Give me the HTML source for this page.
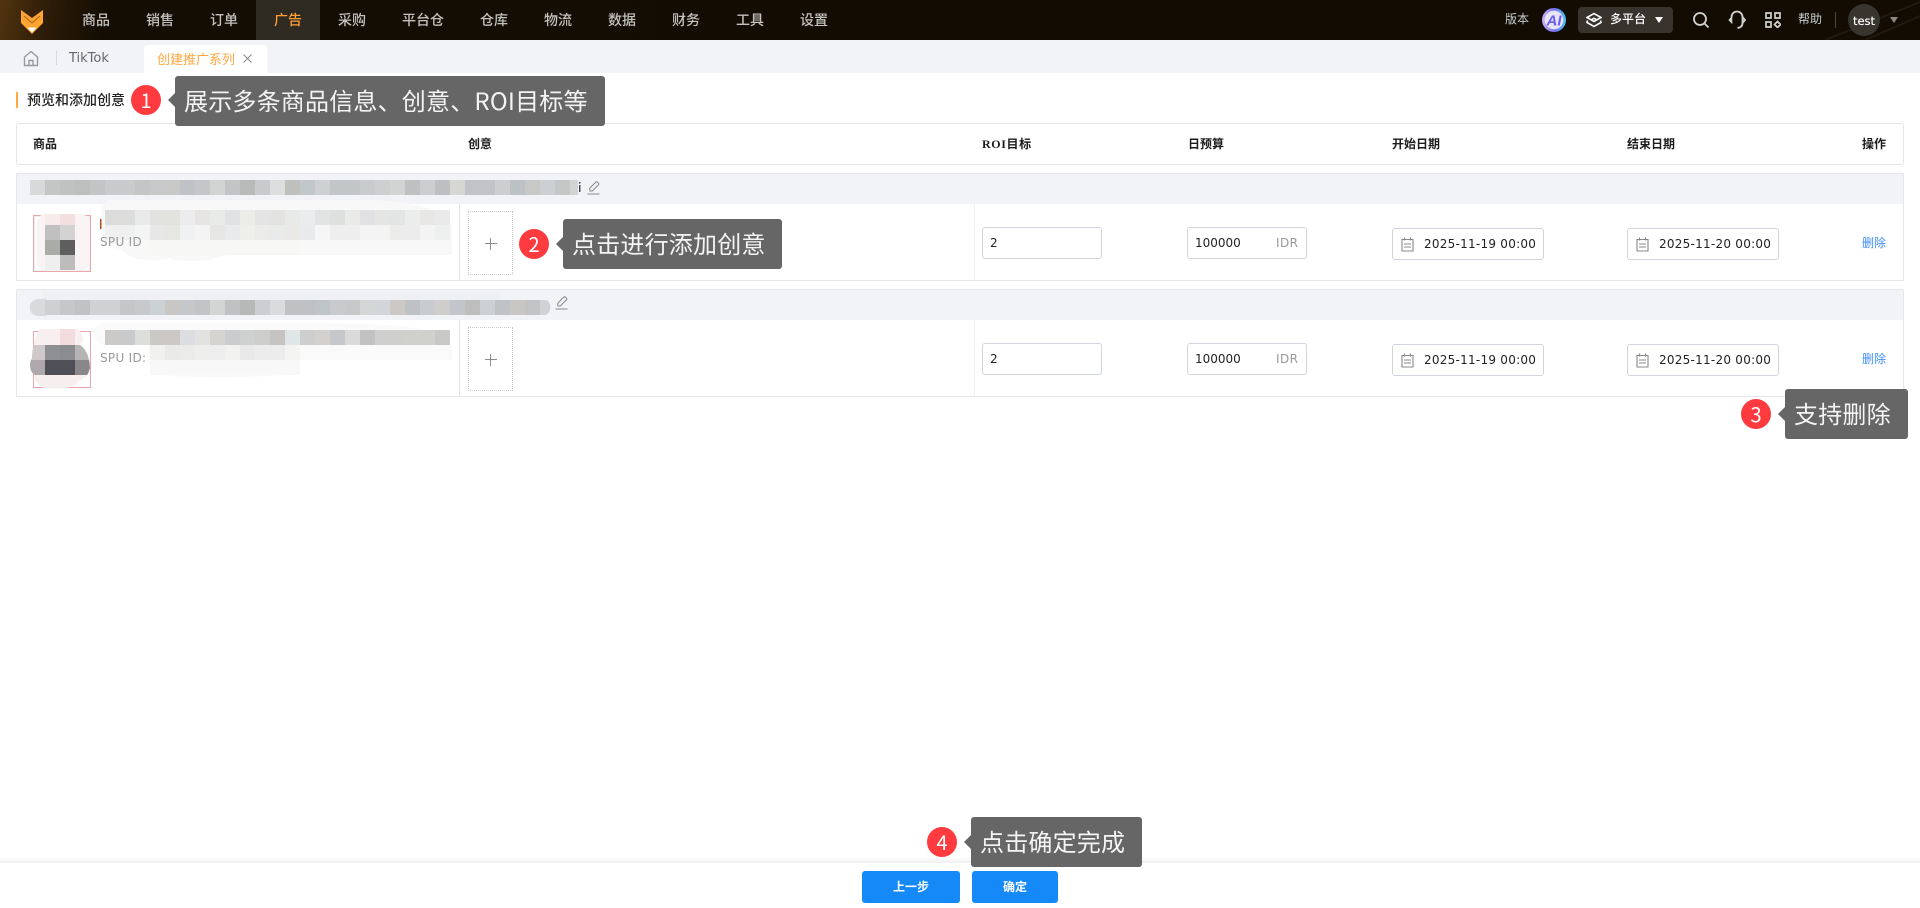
<!DOCTYPE html>
<html lang="zh"><head><meta charset="utf-8"><title>创建推广系列</title>
<style>
*{box-sizing:border-box}
html,body{margin:0;padding:0;width:1920px;height:908px;overflow:hidden;background:#fff;font-family:"Noto Sans CJK SC","Liberation Sans",sans-serif}
.a{position:absolute}
.t{position:absolute;white-space:nowrap;line-height:20px}
.d{font-family:"DejaVu Sans","Noto Sans CJK SC",sans-serif}
.nav{top:10px;width:64px;text-align:center;font-size:14px;font-weight:500;color:#c4c2bf}
.th{top:134px;font-size:12px;font-weight:700;color:#1c1c1c}
.box{position:absolute;border:1px solid #e4e6eb;background:#fff}
.gh{position:absolute;left:16px;width:1888px;height:32px;background:#f2f3f7;border:1px solid #e4e6eb;border-radius:2px 2px 0 0}
.inp{position:absolute;width:120px;height:32px;border:1px solid #d0d4dc;border-radius:3px;background:#fff}
.date{position:absolute;width:152px;height:32px;border:1px solid #d0d4dc;border-radius:3px;background:#fff}
.v{font-size:12px;color:#222}
.tip{position:absolute;height:50px;background:#666;border-radius:3px;color:#f4f4f4;font-size:24px;letter-spacing:.2px;line-height:48px;padding-left:9px;white-space:nowrap}
.arr{position:absolute;width:0;height:0;border-style:solid;border-width:7px 7px 7px 0;border-color:transparent #666 transparent transparent}
.b{position:absolute;width:30px;height:30px;border-radius:50%;background:#ff3b3f;color:#fff;text-align:center;font-size:20px;line-height:30px}
.add{position:absolute;width:45px;height:64px;border:1px dotted #c8cad0}
.del{font-size:12px;color:#3f8ff7;left:1862px}
.btn{position:absolute;top:871px;height:32px;border-radius:3px;background:#1589f7;color:#fff;font-size:12px;font-weight:700;line-height:32px;text-align:center}
svg rect{width:15px;height:15px;shape-rendering:crispEdges}
</style></head><body>

<!-- header -->
<div class="a" style="left:0;top:0;width:1920px;height:40px;background:linear-gradient(100deg,#52340f 0,#2c1b07 50px,#140d03 105px,#120c03 100%)"></div>
<svg class="a" style="left:1700px;top:0" width="220" height="40"><path d="M125 40L220 2M165 40L220 16" stroke="#1f1a12" stroke-width="2" fill="none"/></svg>
<svg class="a" style="left:18px;top:8px" width="28" height="28" viewBox="0 0 28 28"><path d="M3 2L14 10L25 2V15L14 26L3 15Z" fill="#fda433"/><path d="M6 8L14 15L22 8" stroke="#b9701d" stroke-width="1.2" fill="none"/><path d="M9.5 19.5H18.5L14 24.5Z" fill="#fff"/></svg>
<div class="a" style="left:256px;top:0;width:64px;height:40px;background:#2f2a22"></div>
<div class="t nav" style="left:64px">商品</div>
<div class="t nav" style="left:128px">销售</div>
<div class="t nav" style="left:192px">订单</div>
<div class="t nav" style="left:256px;color:#ff9d33">广告</div>
<div class="t nav" style="left:320px">采购</div>
<div class="t nav" style="left:391px">平台仓</div>
<div class="t nav" style="left:462px">仓库</div>
<div class="t nav" style="left:526px">物流</div>
<div class="t nav" style="left:590px">数据</div>
<div class="t nav" style="left:654px">财务</div>
<div class="t nav" style="left:718px">工具</div>
<div class="t nav" style="left:782px">设置</div>

<div class="t" style="left:1505px;top:9px;font-size:12px;color:#c9ced2">版本</div>
<svg class="a" style="left:1542px;top:8px" width="24" height="24" viewBox="0 0 24 24"><defs><linearGradient id="g" x1="0" y1="0" x2="1" y2="0"><stop offset="0" stop-color="#c9b4f7"/><stop offset=".5" stop-color="#7a6cf5"/><stop offset="1" stop-color="#45c3ef"/></linearGradient></defs><circle cx="12" cy="12" r="12" fill="url(#g)"/><circle cx="12" cy="12" r="9.4" fill="#e8e4fb"/><text x="12" y="17.500" text-anchor="middle" font-family="Liberation Sans" font-weight="700" font-style="italic" font-size="15" fill="#6a5cf0">AI</text></svg>
<div class="a" style="left:1578px;top:7px;width:95px;height:26px;background:#38332c;border-radius:4px"></div>
<svg class="a" style="left:1586px;top:12px" width="16" height="16" viewBox="0 0 16 16" fill="none" stroke="#fff" stroke-width="1.6"><path d="M1 5.5L8 1.5L15 5.5L8 9.5Z"/><path d="M1.5 8.5L1 10.5L8 14.5L15 10.5L14.5 8.5"/><path d="M5 8L8 6.3L11 8"/></svg>
<div class="t" style="left:1610px;top:9px;font-size:12px;font-weight:500;color:#fff">多平台</div>
<div class="a" style="left:1655px;top:17px;border-style:solid;border-width:6px 4px 0;border-color:#fff transparent transparent"></div>
<svg class="a" style="left:1692px;top:11px" width="18" height="18" viewBox="0 0 18 18" fill="none" stroke="#d2d2d0" stroke-width="1.8"><circle cx="8" cy="8" r="6"/><path d="M12.5 12.5L16.5 16.5"/></svg>
<svg class="a" style="left:1728px;top:10px" width="18" height="20" viewBox="0 0 18 20" fill="none" stroke="#d2d2d0" stroke-width="1.8"><path d="M3.500 8V7A5.500 5.500 0 0 1 14.500 7V13C14.500 15.500 13 17.500 9.500 18"/><path d="M3.800 7L1 10L3.800 13Z" fill="#d2d2d0" stroke-width="1"/><path d="M14.500 7L17 10L14.500 13"/></svg>
<svg class="a" style="left:1765px;top:12px" width="16" height="16" viewBox="0 0 16 16" fill="none" stroke="#d2d2d0" stroke-width="1.7"><path d="M1 1H6V6H1ZM10 1H15V6H10ZM1 10H6V15H1ZM12.500 9.500L15.500 12.500L12.500 15.500L9.500 12.500Z"/></svg>
<div class="t" style="left:1798px;top:9px;font-size:12px;color:#c9ced2">帮助</div>
<div class="a" style="left:1835px;top:12px;width:1px;height:16px;background:#4a4640"></div>
<div class="a" style="left:1848px;top:4px;width:32px;height:32px;border-radius:50%;background:#38342e"></div>
<div class="t d" style="left:1848px;top:11px;width:32px;text-align:center;font-size:11.500px;color:#fff;text-shadow:0 0 .4px #fff">test</div>
<div class="a" style="left:1890px;top:17px;border-style:solid;border-width:6px 4px 0;border-color:#8a8884 transparent transparent"></div>

<!-- tabs -->
<div class="a" style="left:0;top:40px;width:1920px;height:33px;background:#f2f3f7"></div>
<svg class="a" style="left:23px;top:50px" width="16" height="17" viewBox="0 0 16 17" fill="none" stroke="#9a9a9a" stroke-width="1.400"><path d="M1.500 7L8 1.500L14.500 7V15.500H1.500Z"/><path d="M6 15.500V10.500H10V15.500"/></svg>
<div class="a" style="left:56px;top:51px;width:1px;height:14px;background:#d8d9dd"></div>
<div class="t d" style="left:69px;top:49px;font-size:13px;color:#666">TikTok</div>
<div class="a" style="left:144px;top:45px;width:123px;height:28px;background:#fff;border-radius:3px 3px 0 0"></div>
<div class="t" style="left:157px;top:49px;font-size:13px;color:#ffa640">创建推广系列</div>
<svg class="a" style="left:243px;top:54px" width="9" height="9" viewBox="0 0 9 9" stroke="#888" stroke-width="1" fill="none"><path d="M.5.5L8.500 8.500M8.500.5L.5 8.500"/></svg>

<!-- section title -->
<div class="a" style="left:16px;top:92px;width:2px;height:16px;background:#ffa640"></div>
<div class="t" style="left:27px;top:90px;font-size:14px;font-weight:500;color:#222">预览和添加创意</div>

<!-- table head -->
<div class="box" style="left:16px;top:123px;width:1888px;height:42px;border-radius:3px"></div>
<div class="t th" style="left:33px">商品</div>
<div class="t th" style="left:468px">创意</div>
<div class="t th" style="left:982px;letter-spacing:.6px;font-family:'Liberation Serif','Noto Sans CJK SC',serif">ROI目标</div>
<div class="t th" style="left:1188px">日预算</div>
<div class="t th" style="left:1392px">开始日期</div>
<div class="t th" style="left:1627px">结束日期</div>
<div class="t th" style="left:1862px">操作</div>

<!-- group 1 -->
<div class="gh" style="top:173px"></div>
<div class="box" style="left:16px;top:204px;width:1888px;height:77px;border-top:0"></div>
<div class="a" style="left:459px;top:204px;width:1px;height:76px;background:#e4e6eb"></div>
<div class="a" style="left:974px;top:204px;width:1px;height:76px;background:#eef0f3"></div>

<!-- group 2 -->
<div class="gh" style="top:289px"></div>
<div class="box" style="left:16px;top:320px;width:1888px;height:77px;border-top:0"></div>
<div class="a" style="left:459px;top:320px;width:1px;height:76px;background:#e4e6eb"></div>
<div class="a" style="left:974px;top:320px;width:1px;height:76px;background:#eef0f3"></div>

<!-- thumbnails frames -->
<div class="a" style="left:33px;top:215px;width:58px;height:57px;border:1px solid #e9a7ac;outline:1px solid #eceef2;outline-offset:-2px"></div>
<div class="a" style="left:33px;top:331px;width:58px;height:57px;border:1px solid #e9a7ac"></div>

<!-- mosaics -->
<svg class="a" style="left:0;top:0" width="620" height="400">
<defs><clipPath id="c2"><path d="M40 329H78C84 334 84 343 80 345C88 350 90 362 90 368C88 376 84 380 78 381C76 389 60 389 44 388C36 384 34 378 35 375C29 372 29 362 32 358C32 350 35 336 40 329Z"/></clipPath></defs>
<!-- thumb1 -->
<path d="M46 214C40 214 37 218 37 225V262C37 268 42 271 50 271H75C84 271 90 268 90 260V222C90 216 84 214 76 214Z" fill="#f9f3f3"/>
<rect x="45" y="214" style="height:11px" fill="#f7ebeb"/><rect x="60" y="214" style="height:11px" fill="#f3dfe0"/>
<rect x="45" y="225" fill="#c0c0c0"/><rect x="60" y="225" fill="#d3d3d3"/>
<rect x="45" y="240" fill="#a9aca7"/><rect x="60" y="240" fill="#5e5e5e"/>
<rect x="45" y="255" fill="#efefef"/><rect x="60" y="255" fill="#bcbcbc"/>
<!-- thumb2 -->
<g clip-path="url(#c2)">
<rect x="30" y="329" style="width:60px;height:16px" fill="#f8f0f0"/><rect x="60" y="329" style="height:16px" fill="#f3dcde"/>
<rect x="30" y="345" fill="#cfc9cc"/><rect x="45" y="345" fill="#8f9094"/><rect x="60" y="345" fill="#8a8c8f"/><rect x="75" y="345" fill="#b8b4b6"/>
<rect x="30" y="360" fill="#aea8ac"/><rect x="45" y="360" fill="#4f4f57"/><rect x="60" y="360" fill="#4f4f57"/><rect x="75" y="360" fill="#8b868a"/>
<rect x="30" y="375" style="width:60px" fill="#f7eeef"/>
</g>

<!-- group1 title -->
<g>
<rect x="30" y="180" fill="#d8d9da"/><rect x="45" y="180" fill="#c4c5c5"/><rect x="60" y="180" fill="#c0c1c1"/><rect x="75" y="180" fill="#bdbebe"/><rect x="90" y="180" fill="#c2c4c6"/><rect x="105" y="180" fill="#c9cacb"/><rect x="120" y="180" fill="#c8cacc"/><rect x="135" y="180" fill="#c4c5c5"/><rect x="150" y="180" fill="#c7c8c9"/><rect x="165" y="180" fill="#c8c8c6"/><rect x="180" y="180" fill="#bfc3c7"/><rect x="195" y="180" fill="#c4c6c8"/><rect x="210" y="180" fill="#d2d3d3"/><rect x="225" y="180" fill="#c2c4c6"/><rect x="240" y="180" fill="#b8b9b9"/><rect x="255" y="180" fill="#c8cacc"/><rect x="270" y="180" fill="#dcdee0"/><rect x="285" y="180" fill="#bfbfbc"/><rect x="300" y="180" fill="#c2c7c9"/><rect x="315" y="180" fill="#ced0d2"/><rect x="330" y="180" fill="#c3c6c6"/><rect x="345" y="180" fill="#c3c6c6"/><rect x="360" y="180" fill="#c9cbcc"/><rect x="375" y="180" fill="#cdcfd0"/><rect x="390" y="180" fill="#d2d3d3"/><rect x="405" y="180" fill="#bec0c2"/><rect x="420" y="180" fill="#cbcdcf"/><rect x="435" y="180" fill="#bdbfc1"/><rect x="450" y="180" fill="#d6d6d3"/><rect x="465" y="180" fill="#c2c3c6"/><rect x="480" y="180" fill="#c2c3c6"/><rect x="495" y="180" fill="#ccced0"/><rect x="510" y="180" fill="#bcc2c4"/><rect x="525" y="180" fill="#c8c8c6"/><rect x="540" y="180" fill="#ccd0d2"/><rect x="555" y="180" fill="#c5c7c7"/><rect x="570" y="180" style="width:8px" fill="#d2d3d4"/>
</g>
<!-- group1 desc smear -->
<path d="M108 200H372C420 202 440 210 452 225V255H265C236 255 225 254 216 258C205 262 175 262 170 258C160 262 130 262 122 250C104 245 100 240 102 222C100 212 102 206 108 200Z" fill="#f8f8f8"/>
<g>
<rect x="105" y="210" fill="#dcdcdb"/><rect x="120" y="210" fill="#dcdcdd"/><rect x="135" y="210" fill="#e9ebea"/><rect x="150" y="210" fill="#e2e2df"/><rect x="165" y="210" fill="#e2e2df"/><rect x="180" y="210" fill="#ececee"/><rect x="195" y="210" fill="#e6e5e3"/><rect x="210" y="210" fill="#e9ebe9"/><rect x="225" y="210" fill="#e1e2e4"/><rect x="240" y="210" fill="#ecece9"/><rect x="255" y="210" fill="#e3e4e3"/><rect x="270" y="210" fill="#e3e3e2"/><rect x="285" y="210" fill="#e8eae8"/><rect x="300" y="210" fill="#ebecee"/><rect x="315" y="210" fill="#e2e3e3"/><rect x="330" y="210" fill="#dedfdf"/><rect x="345" y="210" fill="#eaeae8"/><rect x="360" y="210" fill="#e1e1e4"/><rect x="375" y="210" fill="#e5e5e4"/><rect x="390" y="210" fill="#e3e4e4"/><rect x="405" y="210" fill="#ebecec"/><rect x="420" y="210" fill="#e8e7e6"/><rect x="435" y="210" fill="#eaeaea"/>
<rect x="105" y="225" fill="#f0f0f0"/><rect x="120" y="225" fill="#f0f0f0"/><rect x="135" y="225" fill="#f3f5f4"/><rect x="150" y="225" fill="#e6e7e6"/><rect x="165" y="225" fill="#e6e6e3"/><rect x="180" y="225" fill="#f0f1f2"/><rect x="195" y="225" fill="#f4f4f4"/><rect x="210" y="225" fill="#e6e7e5"/><rect x="225" y="225" fill="#e9eaec"/><rect x="240" y="225" fill="#eeeeeb"/><rect x="255" y="225" fill="#ebecea"/><rect x="270" y="225" fill="#e9ebea"/><rect x="285" y="225" fill="#ebe9e6"/><rect x="300" y="225" fill="#e8eaec"/><rect x="315" y="225" fill="#f6f6f6"/><rect x="330" y="225" fill="#eeeeee"/><rect x="345" y="225" fill="#eeeeee"/><rect x="360" y="225" fill="#f4f4f4"/><rect x="375" y="225" fill="#f4f4f4"/><rect x="390" y="225" fill="#ececea"/><rect x="405" y="225" fill="#ececec"/><rect x="420" y="225" fill="#f3f3f3"/><rect x="435" y="225" fill="#eeefef"/>
<rect x="150" y="240" style="width:150px" fill="#f7f7f6"/>
</g>
<rect x="100" y="219" style="width:1.500px;height:10px" fill="#a84a20"/>

<!-- group2 title -->
<path d="M42 292H500V300H42Z" fill="#eff0f3"/>
<path d="M46 299H38C27 300 27 315 38 316H46Z" fill="#d9dadb"/>
<g>
<rect x="45" y="300" fill="#ced0d2"/><rect x="60" y="300" fill="#c5c7c8"/><rect x="75" y="300" fill="#c1c2c3"/><rect x="90" y="300" fill="#cfd1d2"/><rect x="105" y="300" fill="#d0d1d2"/><rect x="120" y="300" fill="#c4c6c7"/><rect x="135" y="300" fill="#c8c9ca"/><rect x="150" y="300" fill="#ccd1d3"/><rect x="165" y="300" fill="#c9c7c4"/><rect x="180" y="300" fill="#c5c8cb"/><rect x="195" y="300" fill="#c2c4c6"/><rect x="210" y="300" fill="#d3d4d4"/><rect x="225" y="300" fill="#bfc1c2"/><rect x="240" y="300" fill="#b7b8b8"/><rect x="255" y="300" fill="#ccced1"/><rect x="270" y="300" fill="#dadbdc"/><rect x="285" y="300" fill="#c0c1c2"/><rect x="300" y="300" fill="#c0c1c2"/><rect x="315" y="300" fill="#bfc4c6"/><rect x="330" y="300" fill="#c8cacb"/><rect x="345" y="300" fill="#c6c8ca"/><rect x="360" y="300" fill="#d5d6d6"/><rect x="375" y="300" fill="#d3d6d8"/><rect x="390" y="300" fill="#ccc9c4"/><rect x="405" y="300" fill="#bec2c4"/><rect x="420" y="300" fill="#c8ccd0"/><rect x="435" y="300" fill="#cfcecb"/><rect x="450" y="300" fill="#c2c5c9"/><rect x="465" y="300" fill="#bebebf"/><rect x="480" y="300" fill="#ced1d3"/><rect x="495" y="300" fill="#bfc3c5"/><rect x="510" y="300" fill="#c8c7c4"/><rect x="525" y="300" fill="#c2c3c5"/>
</g>
<path d="M540 300H545C552 300 552 314 545 315H540Z" fill="#d0d1d3"/>
<!-- group2 desc smear -->
<path d="M105 323H310C380 324 440 324 452 345V360H300V374C260 378 180 378 162 375C148 372 148 362 148 345H105C90 345 90 323 105 323Z" fill="#fafafa"/>
<g>
<rect x="105" y="330" fill="#ccc9c6"/><rect x="120" y="330" fill="#c9cacb"/><rect x="135" y="330" fill="#dcdedc"/><rect x="150" y="330" fill="#cbc8c5"/><rect x="165" y="330" fill="#cbc8c5"/><rect x="180" y="330" fill="#dcdde0"/><rect x="195" y="330" fill="#e2e3e1"/><rect x="210" y="330" fill="#d6d4d0"/><rect x="225" y="330" fill="#cbccce"/><rect x="240" y="330" fill="#cfd0d0"/><rect x="255" y="330" fill="#cdcdcc"/><rect x="270" y="330" fill="#c6c3c0"/><rect x="285" y="330" fill="#e0e5e8"/><rect x="300" y="330" fill="#cfcece"/><rect x="315" y="330" fill="#d3d0cd"/><rect x="330" y="330" fill="#c5c8cb"/><rect x="345" y="330" fill="#dadada"/><rect x="360" y="330" fill="#c2c2c2"/><rect x="375" y="330" fill="#cfcfcf"/><rect x="390" y="330" fill="#cfcfce"/><rect x="405" y="330" fill="#d0d0cc"/><rect x="420" y="330" fill="#d0d0cc"/><rect x="435" y="330" fill="#c9c9c7"/>
<rect x="150" y="345" fill="#f1f1ef"/><rect x="165" y="345" fill="#eaeae9"/><rect x="180" y="345" fill="#ebebea"/><rect x="195" y="345" fill="#eeeeed"/><rect x="210" y="345" fill="#eeeeee"/><rect x="225" y="345" fill="#f2f2f1"/><rect x="240" y="345" fill="#e9e9e9"/><rect x="255" y="345" fill="#ececec"/><rect x="270" y="345" fill="#ececec"/><rect x="285" y="345" fill="#f4f4f3"/>
<rect x="150" y="360" style="width:150px" fill="#f8f8f8"/>
</g>
</svg>

<div class="t d" style="left:100px;top:232px;font-size:12px;color:#999;letter-spacing:.3px">SPU ID</div>
<div class="t d" style="left:100px;top:348px;font-size:12px;color:#999;letter-spacing:.3px">SPU ID:</div>
<div class="t" style="left:578px;top:177px;font-size:13px;color:#222">i</div>

<!-- pencils -->
<svg class="a" style="left:587px;top:181px" width="13" height="14" viewBox="0 0 13 14" fill="none" stroke="#888" stroke-width="1"><path d="M3 10L2.600 7.500L8.500 1.300C9.200.7 10 .7 10.600 1.300L11.300 2C11.900 2.600 11.900 3.400 11.300 4L5.300 10Z"/><path d="M.5 13H12.500"/></svg>
<svg class="a" style="left:555px;top:296px" width="13" height="14" viewBox="0 0 13 14" fill="none" stroke="#888" stroke-width="1"><path d="M3 10L2.600 7.500L8.500 1.300C9.200.7 10 .7 10.600 1.300L11.300 2C11.900 2.600 11.900 3.400 11.300 4L5.300 10Z"/><path d="M.5 13H12.500"/></svg>

<!-- add boxes -->
<div class="add" style="left:468px;top:211px"></div>
<div class="a" style="left:485px;top:243px;width:12px;height:1px;background:#8c8c8c"></div><div class="a" style="left:490px;top:238px;width:1px;height:12px;background:#8c8c8c"></div>
<div class="add" style="left:468px;top:327px"></div>
<div class="a" style="left:485px;top:359px;width:12px;height:1px;background:#8c8c8c"></div><div class="a" style="left:490px;top:354px;width:1px;height:12px;background:#8c8c8c"></div>

<!-- row 1 controls -->
<div class="inp" style="left:982px;top:227px"></div><div class="t d v" style="left:990px;top:233px">2</div>
<div class="inp" style="left:1187px;top:227px"></div><div class="t d v" style="left:1195px;top:233px">100000</div><div class="t d" style="left:1276px;top:233px;font-size:12px;letter-spacing:.4px;color:#999">IDR</div>
<div class="date" style="left:1392px;top:228px"></div><div class="t d v" style="left:1424px;top:234px;letter-spacing:.25px">2025-11-19 00:00</div>
<div class="date" style="left:1627px;top:228px"></div><div class="t d v" style="left:1659px;top:234px;letter-spacing:.25px">2025-11-20 00:00</div>
<div class="t del" style="top:233px">删除</div>
<!-- row 2 controls -->
<div class="inp" style="left:982px;top:343px"></div><div class="t d v" style="left:990px;top:349px">2</div>
<div class="inp" style="left:1187px;top:343px"></div><div class="t d v" style="left:1195px;top:349px">100000</div><div class="t d" style="left:1276px;top:349px;font-size:12px;letter-spacing:.4px;color:#999">IDR</div>
<div class="date" style="left:1392px;top:344px"></div><div class="t d v" style="left:1424px;top:350px;letter-spacing:.25px">2025-11-19 00:00</div>
<div class="date" style="left:1627px;top:344px"></div><div class="t d v" style="left:1659px;top:350px;letter-spacing:.25px">2025-11-20 00:00</div>
<div class="t del" style="top:349px">删除</div>

<!-- calendar icons -->
<svg class="a" style="left:1401px;top:237px" width="13" height="15" viewBox="0 0 13 15" fill="none" stroke="#888" stroke-width="1.100"><path d="M1 2.500H12V14H1Z"/><path d="M3.500 .5V3.500M9.500 .5V3.500M3 7H10M3 10H10"/></svg>
<svg class="a" style="left:1636px;top:237px" width="13" height="15" viewBox="0 0 13 15" fill="none" stroke="#888" stroke-width="1.100"><path d="M1 2.500H12V14H1Z"/><path d="M3.500 .5V3.500M9.500 .5V3.500M3 7H10M3 10H10"/></svg>
<svg class="a" style="left:1401px;top:353px" width="13" height="15" viewBox="0 0 13 15" fill="none" stroke="#888" stroke-width="1.100"><path d="M1 2.500H12V14H1Z"/><path d="M3.500 .5V3.500M9.500 .5V3.500M3 7H10M3 10H10"/></svg>
<svg class="a" style="left:1636px;top:353px" width="13" height="15" viewBox="0 0 13 15" fill="none" stroke="#888" stroke-width="1.100"><path d="M1 2.500H12V14H1Z"/><path d="M3.500 .5V3.500M9.500 .5V3.500M3 7H10M3 10H10"/></svg>

<!-- footer -->
<div class="a" style="left:0;top:856px;width:1920px;height:7px;background:linear-gradient(#fff,#f0f0f0)"></div>
<div class="a" style="left:0;top:863px;width:1920px;height:45px;background:#fff"></div>
<div class="btn" style="left:862px;width:98px">上一步</div>
<div class="btn" style="left:972px;width:86px">确定</div>

<!-- annotations -->
<div class="b" style="left:131px;top:85px">1</div><div class="arr" style="left:168px;top:93px"></div>
<div class="tip" style="left:175px;top:76px;width:430px">展示多条商品信息、创意、ROI目标等</div>
<div class="b" style="left:519px;top:229px">2</div><div class="arr" style="left:556px;top:237px"></div>
<div class="tip" style="left:563px;top:219px;width:219px">点击进行添加创意</div>
<div class="b" style="left:1741px;top:399px">3</div><div class="arr" style="left:1778px;top:407px"></div>
<div class="tip" style="left:1785px;top:389px;width:123px">支持删除</div>
<div class="b" style="left:927px;top:827px">4</div><div class="arr" style="left:964px;top:835px"></div>
<div class="tip" style="left:971px;top:817px;width:171px">点击确定完成</div>
</body></html>
